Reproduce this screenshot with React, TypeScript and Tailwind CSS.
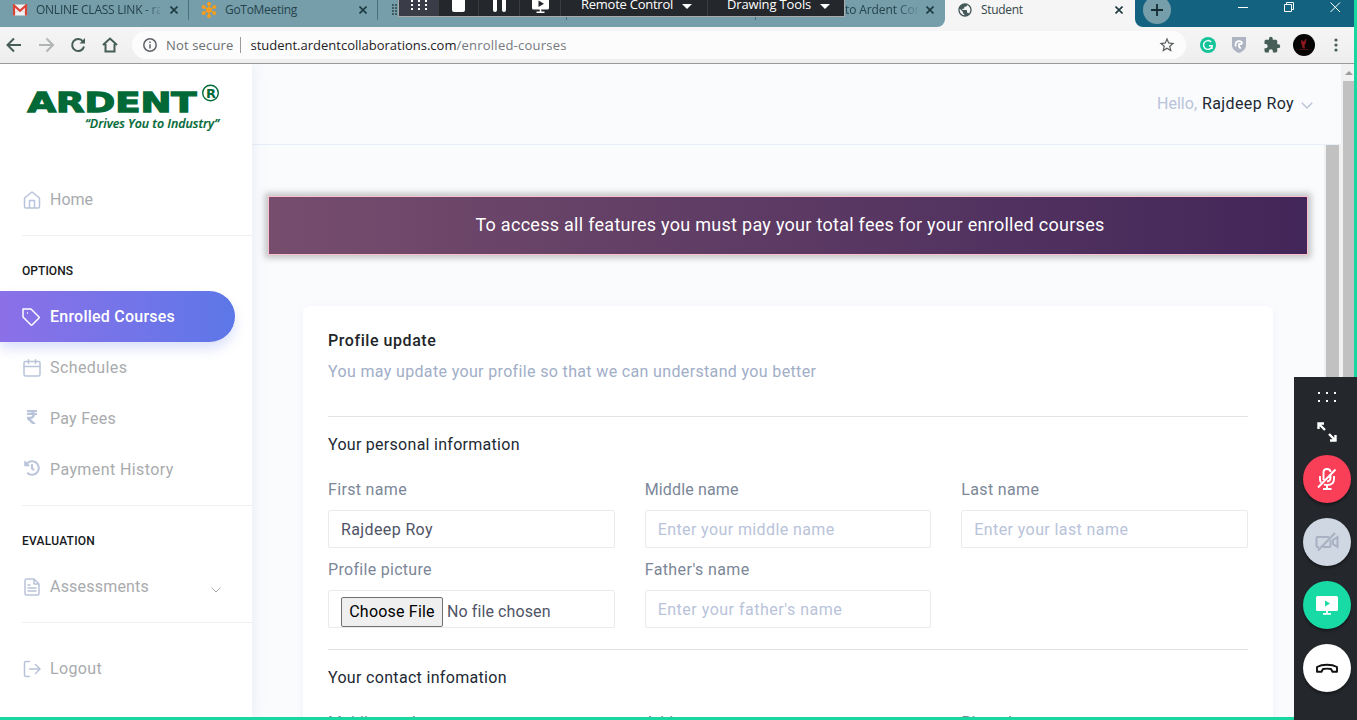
import React from "react";
import { FaHistory, FaRupeeSign } from "react-icons/fa";
import { MdExtension, MdPublic } from "react-icons/md";

type Kids = { children?: React.ReactNode };

function CloseX({ className = "" }: { className?: string }) {
  return (
    <svg viewBox="0 0 8 8" className={`size-2 shrink-0 ${className}`}>
      <path d="M0.5 0.5L7.5 7.5M7.5 0.5L0.5 7.5" stroke="#1d3b40" strokeWidth="1.6" />
    </svg>
  );
}

function Tab({ icon, title, tracking = "" }: { icon?: React.ReactNode; title?: string; tracking?: string }) {
  return (
    <div className="flex h-5 w-[189px] shrink-0 items-center border-r border-[#49707b] pr-2.5 pl-3">
      <span className="flex size-4 shrink-0 items-center justify-center">{icon}</span>
      <span className={`mr-2.5 ml-2 flex-1 overflow-hidden text-xs leading-5 whitespace-nowrap text-[#25444c] ${tracking}`}>{title}</span>
      {title && <CloseX />}
    </div>
  );
}

function TabStrip() {
  return (
    <div className="flex h-[27px] bg-[#f5f5f5]">
      <div className="flex w-[945px] shrink-0 rounded-br-lg bg-[#769daa]">
        <Tab
          title="ONLINE CLASS LINK - ra"
          tracking="tracking-[-0.25px] [mask-image:linear-gradient(to_right,black_88%,transparent_104%)]"
          icon={
            <svg viewBox="0 0 16 12" className="h-3 w-4">
              <rect x="1" y="0.5" width="14" height="11" rx="1" fill="#f2f2f2" />
              <path d="M1 11L6 6.5M15 11L10 6.5" stroke="#d5d5d5" />
              <path d="M2 11.5V1.5L8 6.8L14 1.5V11.5" fill="none" stroke="#db4437" strokeWidth="2.2" />
            </svg>
          }
        />
        <Tab
          title="GoToMeeting"
          tracking="tracking-[-0.3px]"
          icon={
            <svg viewBox="0 0 16 16" className="size-4" fill="#f99d1c" stroke="#f99d1c">
              <circle cx="8" cy="8" r="2.4" />
              <path d="M8 2V14M2.8 5L13.2 11M13.2 5L2.8 11" strokeWidth="1.1" />
              <circle cx="8" cy="1.9" r="1.5" /><circle cx="8" cy="14.1" r="1.5" />
              <circle cx="2.6" cy="4.9" r="1.5" /><circle cx="13.4" cy="4.9" r="1.5" />
              <circle cx="2.6" cy="11.1" r="1.5" /><circle cx="13.4" cy="11.1" r="1.5" />
            </svg>
          }
        />
        <Tab
          icon={
            <svg viewBox="0 0 16 16" className="size-4">
              <path d="M3 2V14M6 2V14M9 2V14" stroke="#354b52" strokeWidth="1.6" strokeDasharray="2 1" />
            </svg>
          }
        />
        <Tab icon={<span className="size-3.5 rounded-full bg-[#f99d1c]" />} />
        <div className="flex h-5 w-[189px] items-center pr-[11px] pl-[89px]">
          <span className="mr-2 flex-1 overflow-hidden text-xs leading-5 tracking-[-0.1px] whitespace-nowrap text-[#25444c] [mask-image:linear-gradient(to_right,black_70%,transparent_104%)]">to Ardent Com</span>
          <CloseX />
        </div>
      </div>
      <div className="flex h-5 w-[190px] shrink-0 items-center pr-3 pl-3">
        <MdPublic className="size-4 text-[#46595a]" />
        <span className="ml-2 flex-1 text-xs leading-5 tracking-[-0.3px] text-[#34464a]">Student</span>
        <CloseX />
      </div>
      <div className="flex flex-1 items-start rounded-bl-lg bg-[#13627f]">
        <div className="-mt-1 ml-2 flex size-7 items-center justify-center rounded-full bg-[#769daa]">
          <svg viewBox="0 0 12 12" className="size-3"><path d="M6 0V12M0 6H12" stroke="#132d33" strokeWidth="1.8" /></svg>
        </div>
        <svg viewBox="0 0 104 14" className="ml-[66px] h-3.5 w-[104px]" fill="none" stroke="#fff">
          <path d="M1 7.5H11M47.500 4.500H54.500V11.500H47.500ZM49.500 4V2.500H56.500V9.500H55M93.500 2.500L103 12M103 2.500L93.500 12" />
        </svg>
      </div>
    </div>
  );
}

function AddressBar() {
  return (
    <div className="flex h-[37px] items-center border-b border-[#999] bg-gradient-to-b from-[#f5f5f5] to-[#eeeeee] pr-3">
      <svg viewBox="0 0 132 36" className="h-9 w-[132px]" fill="none" strokeWidth="2" stroke="#465e57">
        <path d="M21 18H8M14 11.500L7.500 18L14 24.500" />
        <path d="M39 18H52M46.500 11.500L53 18L46.500 24.500" stroke="#b1b5b4" />
        <path d="M83 14.500A6 6 0 1 0 84 19.500" />
        <path d="M85 11V16.500H79.500Z" fill="#465e57" stroke="none" />
        <path d="M103 18L110 11.500L117 18M105.500 17V24.500H114.500V17" />
      </svg>
      <div className="flex h-7 w-[1054px] items-center rounded-full bg-[#fcfcfc] pr-2.5 pl-[11px] text-[13px] whitespace-nowrap">
        <svg viewBox="0 0 14 14" className="size-3.5" fill="none" stroke="#5f6368" strokeWidth="1.5">
          <circle cx="7" cy="7" r="6.200" /><path d="M7 6.200V10.500M7 3.500V5" />
        </svg>
        <span className="mt-px ml-[9px] tracking-[0.15px] text-[#6b6f73]">Not secure</span>
        <span className="mr-[9px] ml-[7px] h-4 w-px bg-[#9b9b9b]" />
        <span className="mt-px text-[#1f2226]">student.ardentcollaborations.com</span>
        <span className="mt-px flex-1 tracking-[0.24px] text-[#75797d]">/enrolled-courses</span>
        <svg viewBox="0 0 24 24" className="size-[18px]" fill="#56595b">
          <path d="M22 9.240l-7.190-.620L12 2 9.190 8.630 2 9.240l5.460 4.730L5.820 21 12 17.270 18.180 21l-1.630-7.030L22 9.240zM12 15.400l-3.760 2.270 1-4.280-3.320-2.880 4.380-.380L12 6.100l1.710 4.040 4.380.380-3.320 2.880 1 4.280L12 15.400z" />
        </svg>
      </div>
      <svg viewBox="0 0 16 16" className="ml-3.5 size-4">
        <circle cx="8" cy="8" r="8" fill="#15c39a" />
        <path d="M11.200 5A4.400 4.400 0 1 0 12.300 8.700H9M12 8.500V12" fill="none" stroke="#fff" strokeWidth="1.400" />
      </svg>
      <svg viewBox="0 0 16 16" className="ml-[15px] size-4">
        <path d="M1 0H15V8C15 12 12 14.500 8 16C4 14.500 1 12 1 8Z" fill="#aeb4c2" />
        <path d="M5 9.500A3.600 3.600 0 1 1 11.500 6.500M11 7.200H8V8.500Q8 11 10 11" fill="none" stroke="#fff" strokeWidth="1.700" />
      </svg>
      <MdExtension className="ml-4 size-[18px] text-[#465e57]" />
      <svg viewBox="0 0 22 22" className="ml-3 size-[22px]">
        <circle cx="11" cy="11" r="11" fill="#050304" />
        <path d="M8.500 6L10.500 8L13 5L12.500 9L11 12L12 14H10L8.500 9ZM6.500 15.500H15" fill="#8e1720" stroke="#8e1720" strokeWidth="0.600" />
      </svg>
      <svg viewBox="0 0 4 14" className="ml-[19px] h-3.5 w-1" fill="#465e57">
        <circle cx="2" cy="2" r="1.600" /><circle cx="2" cy="7" r="1.600" /><circle cx="2" cy="12" r="1.600" />
      </svg>
    </div>
  );
}

function Cell({ className = "", children }: Kids & { className?: string }) {
  return <div className={`flex shrink-0 items-start border-r border-[#3a3d42] ${className}`}>{children}</div>;
}

function MeetingToolbar() {
  return (
    <div className="absolute top-0 left-[398px] flex h-[17px] w-[447px] overflow-hidden border-x border-b border-[#a9a9a9] bg-[#24272c] text-[13px] text-white">
      <Cell className="w-10 bg-[#3a3d47] pl-3">
        <svg viewBox="0 0 16 12" className="h-3 w-4" fill="#fff">
          <path d="M0 0h2v2h-2zM7 0h2v2h-2zM14 0h2v2h-2zM0 4h2v2h-2zM7 4h2v2h-2zM14 4h2v2h-2zM0 8h2v2h-2zM7 8h2v2h-2zM14 8h2v2h-2z" />
        </svg>
      </Cell>
      <Cell className="w-10 pl-[13px]"><span className="h-[11.500px] w-[13px] rounded-b-xs bg-white" /></Cell>
      <Cell className="w-[41px] gap-[5px] pl-3.5">
        <span className="h-[11.500px] w-1 rounded-b-xs bg-white" /><span className="h-[11.500px] w-1 rounded-b-xs bg-white" />
      </Cell>
      <Cell className="w-[41px] pl-3">
        <svg viewBox="0 0 17 13" className="h-[13px] w-[17px]">
          <path d="M0 0H17V8Q17 9.500 15.500 9.500H1.500Q0 9.500 0 8Z" fill="#fff" /><path d="M6.500 0.500L12 3.800L6.500 7Z" fill="#24272c" />
          <path d="M8.500 9V12M4.500 12.200H12.500" stroke="#fff" strokeWidth="1.500" />
        </svg>
      </Cell>
      <Cell className="w-[147px] pl-5">
        <span className="-mt-[5px] leading-[18px] tracking-[-0.250px] whitespace-nowrap">Remote Control</span>
        <span className="mt-1 ml-[9px] h-0 w-0 border-x-5 border-t-5 border-x-transparent border-t-white" />
      </Cell>
      <div className="flex pl-[19px]">
        <span className="-mt-[5px] leading-[18px] tracking-[-0.150px] whitespace-nowrap">Drawing Tools</span>
        <span className="mt-1 ml-[9px] h-0 w-0 border-x-5 border-t-5 border-x-transparent border-t-white" />
      </div>
    </div>
  );
}

function Line({ children }: Kids) {
  return (
    <svg viewBox="0 0 18 18" className="size-[18px]" fill="none" stroke="#b9c3d9" strokeWidth="1.500" strokeLinejoin="round" strokeLinecap="round">
      {children}
    </svg>
  );
}

function NavItem({ icon, children, tracking = "", active = false, chevron = false }: Kids & { icon: React.ReactNode; tracking?: string; active?: boolean; chevron?: boolean }) {
  return (
    <div
      className={
        active
          ? "flex h-[51px] w-[235px] items-center rounded-r-full bg-gradient-to-r from-[#8b70e8] to-[#5c77e8] pl-[22px] font-medium text-white shadow-[0_7px_12px_rgba(95,118,232,0.21)]"
          : "flex h-[51px] w-[252px] items-center pl-[23px] text-[#a9abae]"
      }
    >
      <span className="flex w-[18px] shrink-0 justify-center">{icon}</span>
      <span className={`flex-1 ${active ? "ml-2.5" : "ml-[9px]"} ${tracking}`}>{children}</span>
      {chevron && (
        <svg viewBox="0 0 10 6" className="mt-1.5 mr-[31px] h-1.5 w-2.5" fill="none" stroke="#a9abae"><path d="M0.500 0.500L5 5L9.500 0.500" /></svg>
      )}
    </div>
  );
}

function NavTitle({ children, className = "" }: Kids & { className?: string }) {
  return <div className={`h-5 pl-[22px] text-xs leading-5 font-medium text-[#16181b] ${className}`}>{children}</div>;
}

function Sidebar() {
  return (
    <aside className="z-10 flex w-[252px] shrink-0 flex-col bg-white shadow-[1px_0_14px_rgba(120,150,190,0.14)]">
      <div className="h-[110px] pt-[18px] pl-[26px]">
        <svg viewBox="0 0 196 52" className="h-[52px] w-[196px]" fill="#026937">
          <text x="1.500" y="29.500" fontFamily="DejaVu Sans" fontWeight="700" fontSize="27" textLength="169" lengthAdjust="spacingAndGlyphs" stroke="#026937" strokeWidth="1.300">ARDENT</text>
          <circle cx="184.500" cy="11" r="7.800" fill="none" stroke="#026937" strokeWidth="1.400" />
          <text x="180" y="15.500" fontFamily="DejaVu Sans" fontWeight="700" fontSize="12" textLength="10" lengthAdjust="spacingAndGlyphs">R</text>
          <text x="59" y="45.500" fontFamily="Open Sans" fontWeight="600" fontStyle="italic" fontSize="13" textLength="134" lengthAdjust="spacingAndGlyphs" stroke="#026937" strokeWidth="0.200">“Drives You to Industry”</text>
        </svg>
      </div>
      <NavItem icon={<Line><path d="M1.500 7L9 1L16.500 7V15.500Q16.500 17 15 17H3Q1.500 17 1.500 15.500ZM6.500 17V9.500H11.500V17" /></Line>}>Home</NavItem>
      <div className="mt-2.5 ml-[22px] border-t border-[#efeff1]" />
      <NavTitle className="mt-[25px] mb-2.5 tracking-[0.05px]">OPTIONS</NavTitle>
      <NavItem
        active
        tracking="tracking-[0.23px]"
        icon={
          <svg viewBox="0 0 18 18" className="size-[18px] shrink-0" fill="none" stroke="#fff" strokeWidth="1.500" strokeLinejoin="round">
            <path d="M1 1H9L17 9Q17.500 9.500 17 10L10 17Q9.500 17.500 9 17L1 9Z" /><path d="M5 5H6" />
          </svg>
        }
      >
        Enrolled Courses
      </NavItem>
      <NavItem tracking="tracking-[0.42px]" icon={<Line><rect x="1" y="2.500" width="16" height="14.500" rx="1.500" /><path d="M1 7.500H17M5.500 0.800V4.500M12.500 0.800V4.500" /></Line>}>Schedules</NavItem>
      <NavItem tracking="tracking-[0.25px]" icon={<FaRupeeSign className="mb-1 size-4 text-[#b9c3d9]" />}>Pay Fees</NavItem>
      <NavItem tracking="tracking-[0.4px]" icon={<FaHistory className="mb-1 size-4 text-[#b9c3d9]" />}>Payment History</NavItem>
      <div className="mt-2.5 ml-[22px] border-t border-[#efeff1]" />
      <NavTitle className="mt-[25px] mb-2.5 tracking-[0.23px]">EVALUATION</NavTitle>
      <NavItem chevron tracking="tracking-[0.2px]" icon={<Line><path d="M3.500 1H11L16 6V15.500Q16 17 14.500 17H3.500Q2 17 2 15.500V2.500Q2 1 3.500 1ZM11 1V6H16M5 7H7M5 10H13M5 13H13" /></Line>}>Assessments</NavItem>
      <div className="mt-2.5 ml-[22px] border-t border-[#efeff1]" />
      <div className="h-5" />
      <NavItem tracking="tracking-[0.35px]" icon={<Line><path d="M6.500 1.500H3Q1.500 1.500 1.500 3V15Q1.500 16.500 3 16.500H6.500M6.500 9H17M12.500 4.500L17 9L12.500 13.500" /></Line>}>Logout</NavItem>
    </aside>
  );
}

function Field({ label, children, tracking = "" }: Kids & { label: string; tracking?: string }) {
  return (
    <label className="block h-20">
      <span className={`block h-[33px] pt-px leading-6 text-[#7c8798] ${tracking}`}>{label}</span>
      <span className="flex h-[38px] items-center rounded-xs border border-[#e9ecef] px-3 pt-0.5 text-[#4f5467]">{children}</span>
    </label>
  );
}

function ProfileCard() {
  return (
    <section className="mt-[51px] ml-[35px] h-[600px] w-[970px] rounded-md bg-white px-[25px] pt-[23px] shadow-[0_3px_9px_1px_rgba(120,150,190,0.08)]">
      <h4 className="leading-6 font-medium tracking-[0.56px] text-[#212529]">Profile update</h4>
      <p className="mt-[7px] leading-6 tracking-[0.35px] text-[#a1aec8]">You may update your profile so that we can understand you better</p>
      <hr className="mt-8 border-[#e2e3e5]" />
      <h5 className="mt-4 leading-6 tracking-[0.28px] text-[#212934]">Your personal information</h5>
      <div className="mt-5 grid grid-cols-3 gap-x-[30px]">
        <Field label="First name" tracking="tracking-[0.33px]"><span className="tracking-[0.38px]">Rajdeep Roy</span></Field>
        <Field label="Middle name" tracking="tracking-[0.15px]"><span className="tracking-[0.4px] text-[#b9c3da]">Enter your middle name</span></Field>
        <Field label="Last name" tracking="tracking-[0.35px]"><span className="tracking-[0.4px] text-[#b9c3da]">Enter your last name</span></Field>
        <Field label="Profile picture" tracking="tracking-[0.3px]">
          <span className="mt-[3px] flex items-center">
            <span className="h-[30px] w-[102px] rounded-xs border border-[#707070] bg-[#efefef] text-center leading-7 tracking-[0.2px] text-black">Choose File</span>
            <span className="ml-1 tracking-[0.1px]">No file chosen</span>
          </span>
        </Field>
        <Field label="Father's name" tracking="tracking-[0.4px]"><span className="tracking-[0.5px] text-[#b9c3da]">Enter your father's name</span></Field>
      </div>
      <hr className="mt-3 border-[#e2e3e5]" />
      <h5 className="mt-4 leading-6 tracking-[0.32px] text-[#212934]">Your contact infomation</h5>
      <div className="mt-5 grid grid-cols-3 gap-x-[30px]">
        <Field label="Mobile number" /><Field label="Address" /><Field label="Pincode" tracking="tracking-[0.2px]" />
      </div>
    </section>
  );
}

function Round({ className, children }: Kids & { className: string }) {
  return <div className={`flex size-12 shrink-0 items-center justify-center rounded-full shadow-[0_2px_3px_rgba(0,0,0,0.4)] ${className}`}>{children}</div>;
}

function CallPanel() {
  return (
    <div className="absolute top-[377px] right-0 z-20 flex h-[343px] w-[63px] flex-col items-center bg-[#24272c] pt-3.5 pl-[3px]">
      <svg viewBox="0 0 20 12" className="h-3 w-5 shrink-0" fill="#fff">
        <path d="M1 1h2v2h-2zM9 1h2v2h-2zM17 1h2v2h-2zM1 9h2v2h-2zM9 9h2v2h-2zM17 9h2v2h-2z" />
      </svg>
      <svg viewBox="0 0 20 20" className="mt-[19px] h-5 w-5 shrink-0" fill="none" stroke="#fff" strokeWidth="2.400">
        <path d="M1.500 7V1.500H7M2 2L8 8M18.500 13V18.500H13M18 18L12 12" />
      </svg>
      <Round className="mt-[13px] bg-[#f93e58]">
        <svg viewBox="0 0 20 24" className="h-6 w-5" fill="none" stroke="#fff" strokeWidth="1.900">
          <path d="M6.500 13V5Q6.500 2 10 2Q13.500 2 13.500 5M13.500 8V11Q13.500 14 10 14.500M3 9V12Q3 14 4 15.500M17 9V12Q17 18 10 18Q8 18 7 17.200M10 18V22M6 22H14.500M1 20.500L18.500 2.500" />
        </svg>
      </Round>
      <Round className="mt-[15px] bg-[#ced7e2]">
        <svg viewBox="0 0 24 20" className="h-5 w-6" fill="none" stroke="#a7b1c1" strokeWidth="2">
          <path d="M14 5H2.500Q1.500 5 1.500 6V14Q1.500 15 2.500 15H4M8 15H14.500Q15.500 15 15.500 14V8M22.500 5L18 8V12L22.500 15ZM3 18.500L20 1" />
        </svg>
      </Round>
      <Round className="mt-[15px] bg-[#18daa4]">
        <svg viewBox="0 0 22 20" className="h-5 w-[22px]">
          <rect y="1" width="22" height="15" rx="1.500" fill="#fff" /><path d="M9 5.500L14 8.500L9 11.500Z" fill="#18daa4" />
          <path d="M11 15V18.500M7 18.900H15" stroke="#fff" strokeWidth="1.800" />
        </svg>
      </Round>
      <Round className="mt-[15px] bg-white">
        <svg viewBox="0 0 24 12" className="h-3 w-6" fill="none" stroke="#111" strokeWidth="1.900" strokeLinejoin="round">
          <path d="M2 9.800V5Q6 2.800 12 2.800Q18 2.800 22 5V9.800H17.500L16 7Q12 6.200 8 7L6.500 9.800Z" />
        </svg>
      </Round>
    </div>
  );
}

export default function App() {
  return (
    <div className="relative h-[720px] w-[1357px] overflow-hidden font-['Open_Sans',sans-serif]">
      <div className="flex h-full flex-col overflow-hidden border-r-3 border-b-3 border-[#18d7a0] bg-[#fafbfd]">
        <TabStrip />
        <AddressBar />
        <div className="flex h-[653px] overflow-hidden font-['Roboto',sans-serif] text-base">
          <Sidebar />
          <main className="flex w-[1089px] shrink-0 flex-col">
            <header className="flex h-[81px] shrink-0 items-center justify-end border-b border-[#e9eff7] pr-7">
              <span className="text-[#b9c3da]">Hello,</span>
              <span className="ml-[5px] tracking-[0.38px] text-[#212934]">Rajdeep Roy</span>
              <svg viewBox="0 0 12 7" className="mt-0.5 ml-[7px] h-[7px] w-3" fill="none" stroke="#b9c3da" strokeWidth="1.400"><path d="M0.800 0.800L6 6L11.200 0.800" /></svg>
            </header>
            <div className="flex h-[572px]">
              <div className="w-[1072px] overflow-hidden pt-[51px] pl-4">
                <div className="flex h-[59px] w-[1040px] items-center justify-center border border-[#ffc0cb] bg-gradient-to-r from-[#764d6d] to-[#432659] text-lg tracking-[0.28px] text-white shadow-[0_0_6px_3px_rgba(110,110,110,0.4)]">
                  <span className="-mt-0.5 ml-1">To access all features you must pay your total fees for your enrolled courses</span>
                </div>
                <ProfileCard />
              </div>
              <div className="w-[17px] border-x-2 border-[#f1f1f1] bg-[#c1c1c1]" />
            </div>
          </main>
          <div className="flex w-[13px] shrink-0 flex-col bg-[#f1f1f1] pl-0.5">
            <div className="flex h-[17px] shrink-0 items-center justify-center">
              <span className="h-0 w-0 border-x-4 border-b-4 border-x-transparent border-b-[#9c9c9c]" />
            </div>
            <div className="flex-1 bg-[#c1c1c1]" />
          </div>
        </div>
      </div>
      <MeetingToolbar />
      <CallPanel />
    </div>
  );
}
